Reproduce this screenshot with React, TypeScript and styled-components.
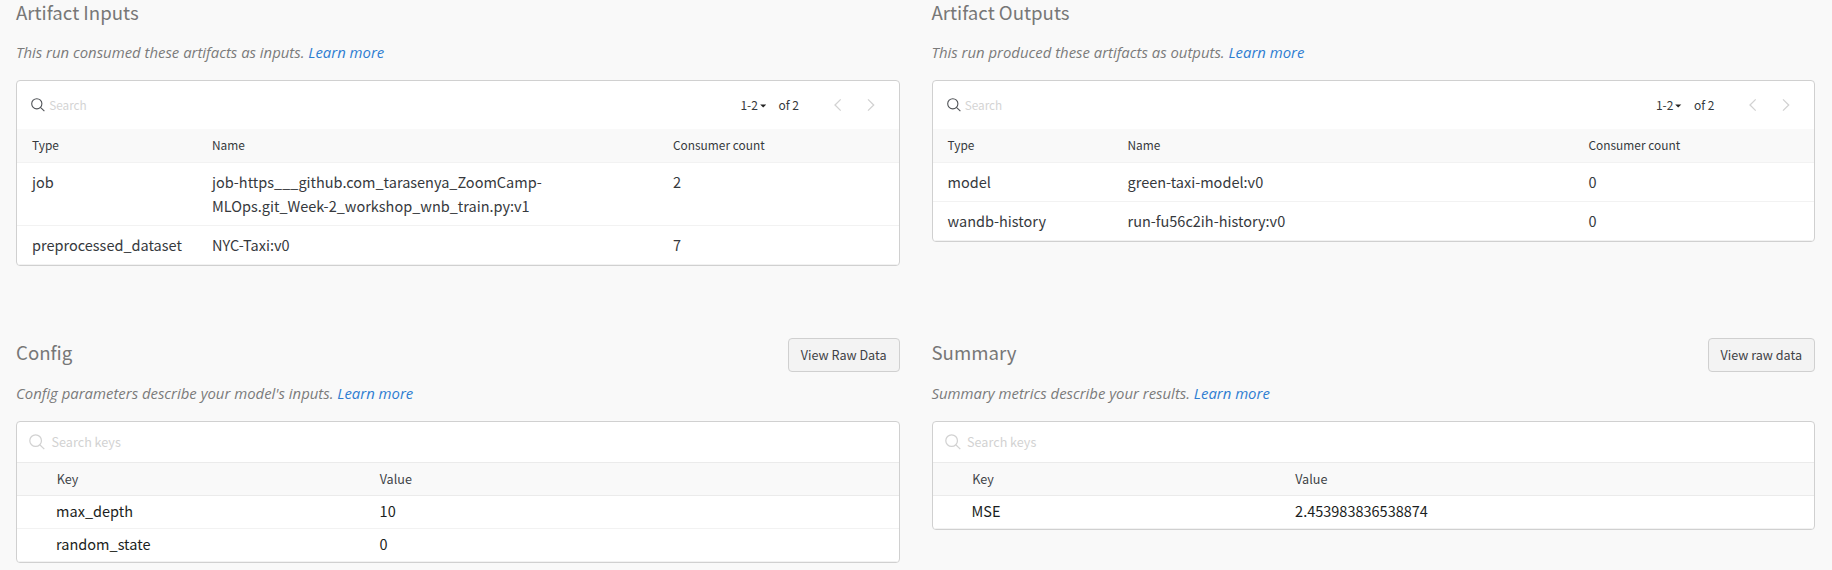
import React from 'react';
import styled, { createGlobalStyle } from 'styled-components';

const GlobalStyle = createGlobalStyle`
  * { box-sizing: border-box; }
  body {
    margin: 0;
    background: #f9f9f9;
    color: #36393d;
    font-family: 'Noto Sans CJK SC', 'Open Sans', sans-serif;
    font-size: 14.5px;
    line-height: 24px;
  }
`;

const Page = styled.main`
  display: grid;
  grid-template-columns: 1fr 1fr;
  column-gap: 32px;
  row-gap: 72px;
  align-items: start;
  padding: 0 17px 0 16px;
  height: 570px;
  align-content: start;
`;

const Panel = styled.section`
  display: flex;
  flex-direction: column;
`;

const PanelHeader = styled.header<{ $withAction?: boolean }>`
  display: flex;
  justify-content: space-between;
  align-items: flex-start;
  margin-bottom: ${p => (p.$withAction ? 9 : 16)}px;
`;

const Title = styled.h2<{ $withAction?: boolean }>`
  margin: ${p => (p.$withAction ? 2 : 0)}px 0 0;
  font-size: 18.65px;
  font-weight: 400;
  line-height: 24px;
  color: #777;
`;

const RawButton = styled.button`
  height: 34px;
  padding: 0 12px;
  border: 1px solid #d0d0d0;
  border-radius: 4px;
  background: #f3f3f3;
  color: #3f4246;
  font-family: inherit;
  font-size: 12.6px;
  line-height: 32px;
  white-space: nowrap;
`;

const Description = styled.p`
  margin: 0 0 16px;
  font-family: 'Open Sans', sans-serif;
  font-size: 14.9px;
  font-style: italic;
  color: #7b7b7b;
`;

const Link = styled.a`
  color: #2e7dd1;
  text-decoration: none;
`;

const Card = styled.div`
  border: 1px solid #d0d0d0;
  border-radius: 4px;
  background: #fff;
  overflow: hidden;
`;

const Toolbar = styled.div`
  display: flex;
  align-items: center;
  height: 48px;
  padding: 0 21px 0 14px;
  font-size: 12px;
`;

const SearchHint = styled.span`
  flex: 1;
  margin-left: 4.2px;
  font-size: 11.75px;
  color: #d4d4d4;
`;

const Caret = styled.svg`
  margin: 1px 12px 0 2px;
`;

const Pager = styled.div`
  display: flex;
  gap: 20px;
  margin-left: 32.6px;
`;

const KeySearch = styled.div`
  display: flex;
  align-items: center;
  gap: 6.6px;
  height: 41px;
  padding: 0 12px;
  border-bottom: 1px solid #ebebeb;
  font-size: 12.6px;
  color: #d2d2d2;
`;

const ArtifactRow = styled.div`
  display: grid;
  grid-template-columns: 180px 461px 1fr;
  padding: 7px 0 7px 15px;
  border-bottom: 1px solid #f2f2f2;
`;

const ArtifactHead = styled(ArtifactRow)`
  height: 34px;
  padding-top: 0;
  padding-bottom: 0;
  background: #f9f9f9;
  font-size: 11.9px;
  line-height: 31px;
`;

const NameCell = styled.span`
  padding-right: 32px;
`;

const KeyRow = styled.div`
  display: grid;
  grid-template-columns: 323.5px 1fr;
  height: 33px;
  padding-left: 39.1px;
  border-bottom: 1px solid #f2f2f2;
  color: #1b1e21;
  line-height: 30px;
`;

const KeyHead = styled(KeyRow)`
  grid-template-columns: 323px 1fr;
  padding-left: 39.7px;
  border-bottom-color: #ebebeb;
  background: #f9f9f9;
  color: #404347;
  font-size: 12.6px;
  line-height: 32px;
`;

const SearchIcon = ({ size, color }: { size: number; color: string }) => (
  <svg width={size} height={size} viewBox="0 0 14 14" fill="none" stroke={color} strokeWidth="1.1">
    <circle cx="5.8" cy="5.8" r="5.1" />
    <path d="M9.4 9.4 13.4 13.2" />
  </svg>
);

const Chevron = ({ d }: { d: string }) => (
  <svg width="13" height="14" viewBox="0 0 13 14" fill="none" stroke="#d2d2d2" strokeWidth="1.3">
    <path d={d} />
  </svg>
);

type Artifact = { type: string; name: string; count: number };

const ArtifactTable = ({ rows }: { rows: Artifact[] }) => (
  <Card>
    <Toolbar>
      <SearchIcon size={14} color="#505357" />
      <SearchHint>Search</SearchHint>
      <span>1-2</span>
      <Caret width="6.5" height="4" viewBox="0 0 6.5 4" fill="#222">
        <path d="M0.2 0.4h6.1L3.2 3.6z" />
      </Caret>
      <span>of 2</span>
      <Pager>
        <Chevron d="M8.7 1.4 3 7l5.7 5.6" />
        <Chevron d="M3 1.4 8.7 7 3 12.6" />
      </Pager>
    </Toolbar>
    <ArtifactHead>
      <span>Type</span>
      <span>Name</span>
      <span>Consumer count</span>
    </ArtifactHead>
    {rows.map(row => (
      <ArtifactRow key={row.name}>
        <span>{row.type}</span>
        <NameCell>{row.name}</NameCell>
        <span>{row.count}</span>
      </ArtifactRow>
    ))}
  </Card>
);

const KeyTable = ({ rows }: { rows: [string, string][] }) => (
  <Card>
    <KeySearch>
      <SearchIcon size={16} color="#d2d2d2" />
      Search keys
    </KeySearch>
    <KeyHead>
      <span>Key</span>
      <span>Value</span>
    </KeyHead>
    {rows.map(([key, value]) => (
      <KeyRow key={key}>
        <span>{key}</span>
        <span>{value}</span>
      </KeyRow>
    ))}
  </Card>
);

type SectionProps = { title: string; text: string; action?: string; children: React.ReactNode };

const Section = ({ title, text, action, children }: SectionProps) => (
  <Panel>
    <PanelHeader $withAction={!!action}>
      <Title $withAction={!!action}>{title}</Title>
      {action && <RawButton>{action}</RawButton>}
    </PanelHeader>
    <Description>
      {text} <Link>Learn more</Link>
    </Description>
    {children}
  </Panel>
);

const inputs: Artifact[] = [
  { type: 'job', name: 'job-https___github.com_tarasenya_ZoomCamp-MLOps.git_Week-2_workshop_wnb_train.py:v1', count: 2 },
  { type: 'preprocessed_dataset', name: 'NYC-Taxi:v0', count: 7 },
];

const outputs: Artifact[] = [
  { type: 'model', name: 'green-taxi-model:v0', count: 0 },
  { type: 'wandb-history', name: 'run-fu56c2ih-history:v0', count: 0 },
];

export default function App() {
  return (
    <>
      <GlobalStyle />
      <Page>
        <Section title="Artifact Inputs" text="This run consumed these artifacts as inputs.">
          <ArtifactTable rows={inputs} />
        </Section>
        <Section title="Artifact Outputs" text="This run produced these artifacts as outputs.">
          <ArtifactTable rows={outputs} />
        </Section>
        <Section title="Config" text="Config parameters describe your model's inputs." action="View Raw Data">
          <KeyTable rows={[['max_depth', '10'], ['random_state', '0']]} />
        </Section>
        <Section title="Summary" text="Summary metrics describe your results." action="View raw data">
          <KeyTable rows={[['MSE', '2.453983836538874']]} />
        </Section>
      </Page>
    </>
  );
}
